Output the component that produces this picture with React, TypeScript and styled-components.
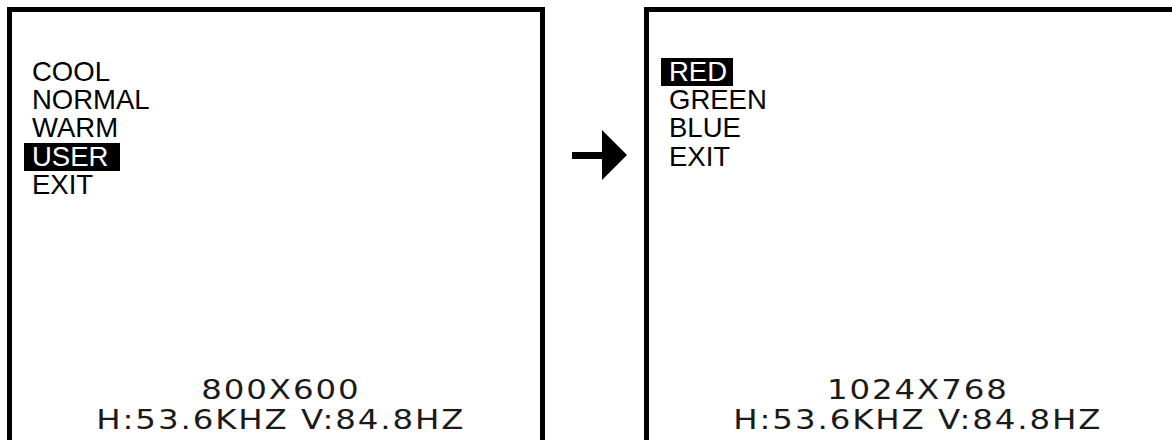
import React from 'react';
import styled, { createGlobalStyle } from 'styled-components';

const GlobalStyle = createGlobalStyle`
    html,
    body {
        margin: 0;
        padding: 0;
        background: #fff;
        overflow: hidden;
    }
`;

const Stage = styled.div`
    display: flex;
    align-items: flex-start;
    width: 1172px;
    height: 440px;
    padding: 7px 0 0 7px;
    box-sizing: border-box;
    overflow: hidden;
`;

const Screen = styled.div`
    flex: none;
    display: flex;
    flex-direction: column;
    justify-content: space-between;
    width: 538px;
    height: 440px;
    box-sizing: border-box;
    border: 5px solid #000;
    border-bottom: none;
    padding: 46px 0 12px 12px;
`;

const Menu = styled.div`
    display: flex;
    flex-direction: column;
    align-items: flex-start;
    font-family: 'Liberation Sans', Arial, sans-serif;
    font-size: 27.5px;
    line-height: 28.2px;
    color: #000;
`;

const MenuItem = styled.div<{ $active?: boolean; $trail?: number }>`
    padding: 0 ${(p) => (p.$active ? p.$trail ?? 8 : 0)}px 0 8px;
    white-space: pre;
    background: ${(p) => (p.$active ? '#000' : 'transparent')};
    color: ${(p) => (p.$active ? '#fff' : '#000')};
`;

const Caption = styled.div`
    align-self: center;
    margin-left: -2px;
    font-family: 'DejaVu Sans', Verdana, sans-serif;
    font-weight: 400;
    font-size: 27px;
    line-height: 30px;
    text-align: center;
    color: #1a1a1a;
    letter-spacing: 1.6px;
    transform: scaleX(1.2);
    white-space: pre;
`;

const Gutter = styled.div`
    flex: none;
    width: 99px;
    box-sizing: border-box;
    padding: 123px 0 0 26px;
`;

interface IItem {
    label: string;
    active?: boolean;
    trail?: number;
}

const userMenu: IItem[] = [
    { label: 'COOL' },
    { label: 'NORMAL' },
    { label: 'WARM' },
    { label: 'USER', active: true, trail: 12 },
    { label: 'EXIT' },
];

const colorMenu: IItem[] = [
    { label: 'RED', active: true, trail: 6 },
    { label: 'GREEN' },
    { label: 'BLUE' },
    { label: 'EXIT' },
];

const OsdScreen: React.FC<{ items: IItem[]; mode: string; freq: string }> = ({ items, mode, freq }) => (
    <Screen>
        <Menu>
            {items.map((item, index) => (
                <MenuItem key={index} $active={item.active} $trail={item.trail}>
                    {item.label}
                </MenuItem>
            ))}
        </Menu>
        <Caption>
            {mode}
            {'\n'}
            {freq}
        </Caption>
    </Screen>
);

const Arrow = () => (
    <svg width="57" height="52" viewBox="0 0 57 52">
        <rect x="1" y="22" width="32" height="7" fill="#000" />
        <polygon points="31,0 56,25 31,50" fill="#000" />
    </svg>
);

export default function App() {
    return (
        <>
            <GlobalStyle />
            <Stage>
                <OsdScreen items={userMenu} mode="800X600" freq="H:53.6KHZ V:84.8HZ" />
                <Gutter>
                    <Arrow />
                </Gutter>
                <OsdScreen items={colorMenu} mode="1024X768" freq="H:53.6KHZ V:84.8HZ" />
            </Stage>
        </>
    );
}
